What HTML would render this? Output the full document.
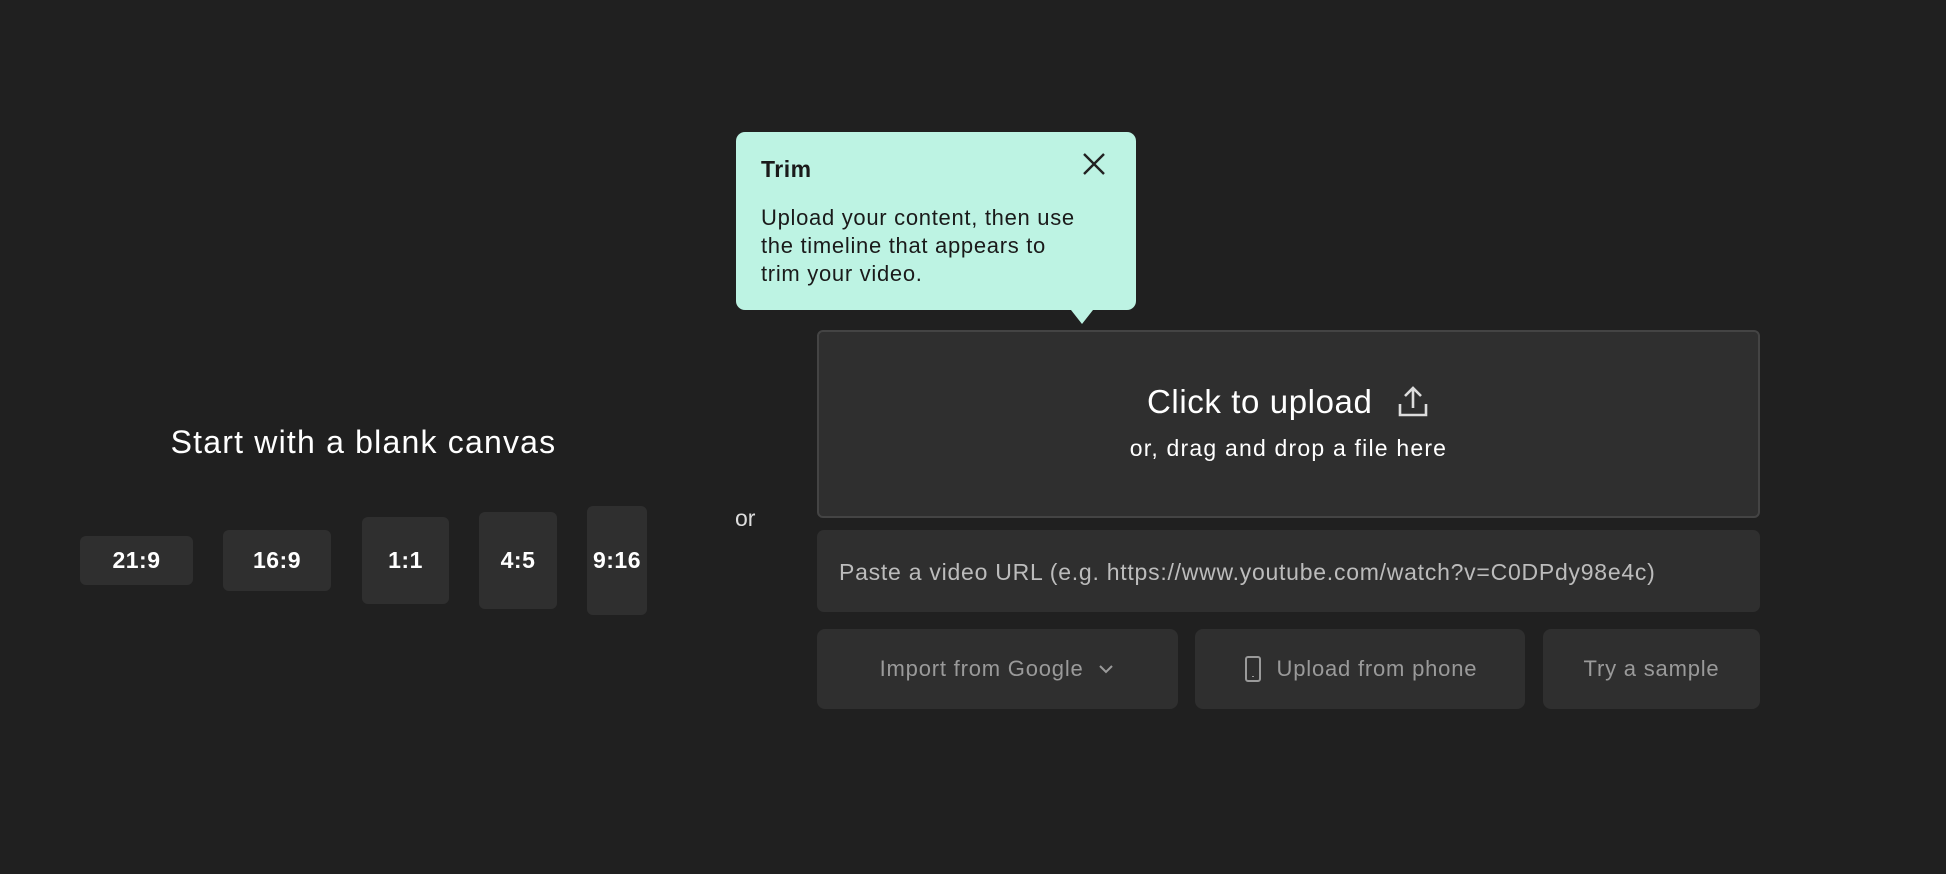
<!DOCTYPE html>
<html><head><meta charset="utf-8"><style>
*{margin:0;padding:0;box-sizing:border-box}
body{width:1946px;height:874px;background:#202020;font-family:"Liberation Sans",sans-serif;color:#fff;position:relative;overflow:hidden}
.a{position:absolute}
.r{position:absolute;background:#2f2f2f;border-radius:6px;display:flex;align-items:center;justify-content:center;font-weight:bold;font-size:23px;color:#fff;letter-spacing:0.5px}
.btn{position:absolute;top:629px;height:80px;background:#2f2f2f;border-radius:8px;display:flex;align-items:center;justify-content:center;color:#9a9a9a;font-size:22px;letter-spacing:0.8px}
</style></head><body>
<div class="a" style="left:0;width:727px;top:424px;text-align:center;font-size:32px;letter-spacing:1.2px">Start with a blank canvas</div>
<div class="r" style="left:80px;top:536px;width:113px;height:49px">21:9</div>
<div class="r" style="left:223px;top:530px;width:108px;height:61px">16:9</div>
<div class="r" style="left:362px;top:517px;width:87px;height:87px">1:1</div>
<div class="r" style="left:479px;top:512px;width:78px;height:97px">4:5</div>
<div class="r" style="left:587px;top:506px;width:60px;height:109px">9:16</div>
<div class="a" style="left:735px;top:505px;font-size:23px;color:#ddd">or</div>

<div class="a" style="left:736px;top:132px;width:400px;height:178px;background:#bdf3e3;border-radius:9px;color:#1a1a1a">
<div class="a" style="left:25px;top:24px;font-weight:bold;font-size:23px;letter-spacing:0.5px">Trim</div>
<svg class="a" style="left:346px;top:20px" width="24" height="24" viewBox="0 0 24 24"><path d="M2 2L22 22M22 2L2 22" stroke="#222" stroke-width="2.4"/></svg>
<div class="a" style="left:25px;top:72px;width:370px;white-space:nowrap;font-size:22px;line-height:28px;letter-spacing:0.7px">Upload your content, then use<br>the timeline that appears to<br>trim your video.</div>
</div>
<div class="a" style="left:1071px;top:310px;width:0;height:0;border-left:11px solid transparent;border-right:11px solid transparent;border-top:14px solid #bdf3e3"></div>

<div class="a" style="left:817px;top:330px;width:943px;height:188px;background:#2f2f2f;border:2px solid #444;border-radius:6px"></div>
<div class="a" style="left:1147px;top:383px;font-size:33px;letter-spacing:0.6px">Click to upload</div>
<svg class="a" style="left:1397px;top:386px" width="32" height="32" viewBox="0 0 32 32" fill="none" stroke="#ddd" stroke-width="2.6"><path d="M16 22V3M8 10l8-8 8 8M3 18v11h26V18"/></svg>
<div class="a" style="left:817px;width:943px;top:435px;text-align:center;font-size:23px;letter-spacing:1.2px">or, drag and drop a file here</div>

<div class="a" style="left:817px;top:530px;width:943px;height:82px;background:#2f2f2f;border-radius:7px"></div>
<div class="a" style="left:839px;top:559px;font-size:23px;color:#bcbcbc;letter-spacing:0.75px">Paste a video URL (e.g. https://www.youtube.com/watch?v=C0DPdy98e4c)</div>

<div class="btn" style="left:817px;width:361px">Import from Google&nbsp;&nbsp;<svg width="18" height="12" viewBox="0 0 18 12" fill="none" stroke="#9a9a9a" stroke-width="2"><path d="M3 3l6 6 6-6"/></svg></div>
<div class="btn" style="left:1195px;width:330px"><svg width="20" height="28" viewBox="0 0 20 28" fill="none" stroke="#9a9a9a" stroke-width="2"><rect x="3" y="2" width="14" height="24" rx="2"/><path d="M10 21v1"/></svg>&nbsp;&nbsp;Upload from phone</div>
<div class="btn" style="left:1543px;width:217px">Try a sample</div>
</body></html>
